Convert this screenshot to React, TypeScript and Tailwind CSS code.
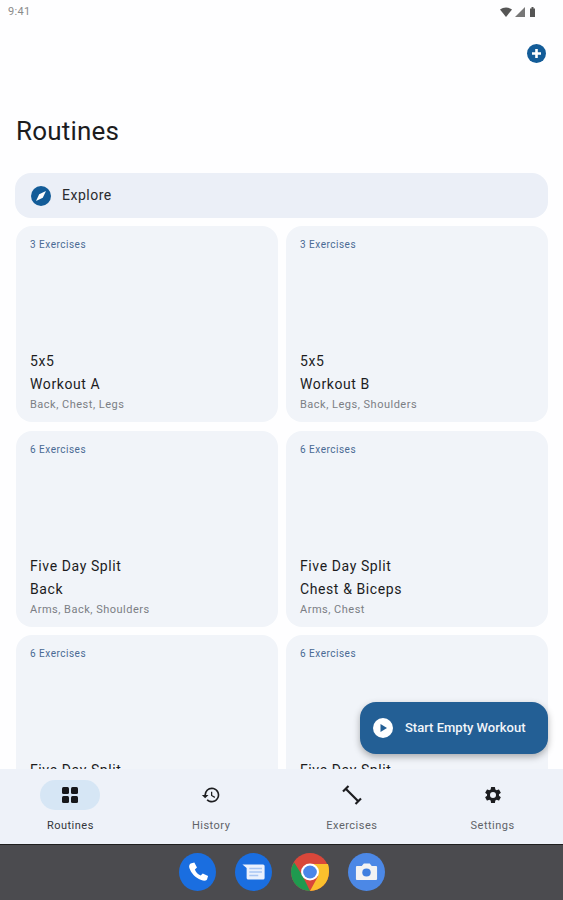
const routines = [
  { count: "3 Exercises", group: "5x5", name: "Workout A", muscles: "Back, Chest, Legs" },
  { count: "3 Exercises", group: "5x5", name: "Workout B", muscles: "Back, Legs, Shoulders" },
  { count: "6 Exercises", group: "Five Day Split", name: "Back", muscles: "Arms, Back, Shoulders" },
  { count: "6 Exercises", group: "Five Day Split", name: "Chest & Biceps", muscles: "Arms, Chest" },
  { count: "6 Exercises", group: "Five Day Split", name: "Legs", muscles: "Legs, Shoulders" },
  { count: "6 Exercises", group: "Five Day Split", name: "Shoulders", muscles: "Arms, Shoulders" },
];

function StatusBar() {
  return (
    <div className="flex h-6 items-center justify-between pl-2 pr-[23px] text-[11px] tracking-[0.3px] text-[#8a8a8a]">
      <span>9:41</span>
      <svg width="40" height="12" viewBox="0 0 40 12" fill="#555">
        <path d="M0 3.5C3.5 .8 8.5 .8 12 3.5L6 11Z" />
        <path d="M25 1V11H15Z" fill="#777" />
        <path d="M30 2.5H31.5V1H33.5V2.5H35V11H30Z" />
      </svg>
    </div>
  );
}

function RoutineCard({ count, group, name, muscles }: (typeof routines)[number]) {
  return (
    <div className="flex h-[196px] flex-col rounded-2xl bg-[#f1f4f9] pl-[14px] pt-[12px]">
      <div className="text-[10px] leading-[13px] tracking-[0.5px] text-[#4a6a94]">{count}</div>
      <div className="mt-auto pb-[10px]">
        <div className="text-[14px] leading-[23px] tracking-[0.6px] text-[#1c1c1e]">{group}</div>
        <div className="text-[14px] leading-[23px] tracking-[0.6px] text-[#1c1c1e]">{name}</div>
        <div className="mt-px text-[11px] leading-[15px] tracking-[0.5px] text-[#7b7e84]">{muscles}</div>
      </div>
    </div>
  );
}

function NavItem({ label, active, children }: { label: string; active?: boolean; children: React.ReactNode }) {
  return (
    <div className="flex flex-1 flex-col items-center">
      <div className={`flex h-[30px] w-[60px] items-center justify-center rounded-full ${active ? "bg-[#d6e6f5]" : ""}`}>
        {children}
      </div>
      <div className={`mt-[9px] text-[11px] leading-[14px] tracking-[0.5px] ${active ? "text-[#33363a]" : "text-[#606368]"}`}>
        {label}
      </div>
    </div>
  );
}

export default function App() {
  return (
    <div className="relative flex h-[900px] w-[563px] flex-col overflow-hidden bg-[#fefeff] font-['Roboto',sans-serif]">
      <StatusBar />
      <div className="flex justify-end pr-[17px] pt-[20px]">
        <svg width="19" height="19" viewBox="0 0 19 19">
          <circle cx="9.5" cy="9.5" r="9.5" fill="#135c98" />
          <path d="M9.5 5V14M5 9.5H14" stroke="#fff" strokeWidth="2.6" />
        </svg>
      </div>
      <h1 className="mt-[52px] pl-4 text-[26px] leading-[32px] tracking-[0.2px] text-[#1c1c1e]">Routines</h1>
      <main className="mt-[26px] min-h-0 flex-1 overflow-hidden px-[15px]">
        <div className="flex h-[45px] items-center gap-[11px] rounded-2xl bg-[#ebeff7] pl-[16px]">
          <svg width="20" height="20" viewBox="0 0 20 20">
            <circle cx="10" cy="10" r="10" fill="#135c98" />
            <path d="M15 5L11.8 11.8L5 15L8.2 8.2Z" fill="#fff" />
          </svg>
          <span className="text-[14px] tracking-[0.5px] text-[#2a2b2e]">Explore</span>
        </div>
        <div className="mt-[8px] grid grid-cols-2 gap-x-[8px] gap-y-[8.5px] pl-px">
          {routines.map((routine) => (
            <RoutineCard key={routine.name} {...routine} />
          ))}
        </div>
      </main>
      <div className="absolute left-[360px] top-[702px] flex h-[52px] w-[188px] items-center gap-[12px] rounded-2xl bg-[#235f95] pl-[13px] shadow-[0_3px_7px_rgba(0,0,0,0.3)]">
        <svg width="20" height="20" viewBox="0 0 20 20">
          <circle cx="10" cy="10" r="10" fill="#fff" />
          <path d="M7.5 6L14 10L7.5 14Z" fill="#235f95" />
        </svg>
        <span className="text-[13px] font-medium text-[#f1f5fa]">Start Empty Workout</span>
      </div>
      <nav className="flex h-[75px] bg-[#eef2f9] pt-[11px]">
        <NavItem label="Routines" active>
          <svg width="18" height="18" viewBox="0 0 18 18" fill="#15171a">
            <rect x="1" y="1" width="7" height="7" rx="1.5" />
            <rect x="10" y="1" width="7" height="7" rx="1.5" />
            <rect x="1" y="10" width="7" height="7" rx="1.5" />
            <rect x="10" y="10" width="7" height="7" rx="1.5" />
          </svg>
        </NavItem>
        <NavItem label="History">
          <svg width="20" height="20" viewBox="0 0 24 24" fill="#1c1d20">
            <path d="M13 3a9 9 0 0 0-9 9H1l3.9 3.9.1.1L9 12H6a7 7 0 1 1 2.05 4.95L6.63 18.37A9 9 0 1 0 13 3zm-1 5v5l4.25 2.52.77-1.28-3.52-2.09V8z" />
          </svg>
        </NavItem>
        <NavItem label="Exercises">
          <svg width="20" height="20" viewBox="0 0 20 20" fill="none" stroke="#1c1d20" strokeWidth="2.2">
            <path d="M4 4L16 16" />
            <path d="M1 6.5L6.5 1" />
            <path d="M13.5 19L19 13.5" />
          </svg>
        </NavItem>
        <NavItem label="Settings">
          <svg width="20" height="20" viewBox="0 0 24 24" fill="#1c1d20">
            <path d="M19.14 12.94c.04-.3.06-.61.06-.94s-.02-.64-.07-.94l2.03-1.58a.49.49 0 0 0 .12-.61l-1.92-3.32a.49.49 0 0 0-.59-.22l-2.39.96a7 7 0 0 0-1.62-.94l-.36-2.54a.48.48 0 0 0-.48-.41h-3.84a.48.48 0 0 0-.47.41l-.36 2.54a7.2 7.2 0 0 0-1.62.94l-2.39-.96a.48.48 0 0 0-.59.22L2.74 8.87a.48.48 0 0 0 .12.61l2.03 1.58c-.05.3-.09.63-.09.94s.02.64.07.94l-2.03 1.58a.49.49 0 0 0-.12.61l1.92 3.32c.12.22.37.29.59.22l2.39-.96c.5.38 1.03.7 1.62.94l.36 2.54c.05.24.24.41.48.41h3.84c.24 0 .44-.17.47-.41l.36-2.54a7 7 0 0 0 1.62-.94l2.39.96c.22.08.47 0 .59-.22l1.92-3.32a.48.48 0 0 0-.12-.61zM12 15.6a3.6 3.6 0 1 1 0-7.2 3.6 3.6 0 0 1 0 7.2z" />
          </svg>
        </NavItem>
      </nav>
      <div className="flex h-[56px] items-center justify-center gap-[19px] border-t border-[#1f1f1f] bg-[#4b4b4f] pb-[1px]">
        <svg width="37" height="38" viewBox="0 0 35 38" preserveAspectRatio="none">
          <ellipse cx="17.5" cy="19" rx="17.5" ry="19" fill="#1a6ee0" />
          <path d="M11 10.5L14.5 9.5L17 14.5L15 16.5C16 19.5 18 21.5 20.5 22.5L22.5 20.5L27.5 23L26.5 26.5C25.5 28 23.5 28 21 27C15 24.5 11.5 20 9.8 15C9.2 13 9.8 11.5 11 10.5Z" fill="#fff" />
        </svg>
        <svg width="37" height="38" viewBox="0 0 35 38" preserveAspectRatio="none">
          <ellipse cx="17.5" cy="19" rx="17.5" ry="19" fill="#1a6ee0" />
          <path d="M7 11.5H26.5A1.5 1.5 0 0 1 28 13V25A1.5 1.5 0 0 1 26.5 26.5H12.5A1.5 1.5 0 0 1 11 25V15Z" fill="#eaf1fd" />
          <path d="M13.5 15.5H25.5M13.5 19H25.5M13.5 22.5H22" stroke="#a9c6f3" strokeWidth="1.6" />
        </svg>
        <svg width="38" height="38" viewBox="0 0 36 38" preserveAspectRatio="none">
          <ellipse cx="18" cy="19" rx="18" ry="19" fill="#d9473a" />
          <path d="M3 9.5L11 23L18 38C8 38 0 29.5 0 19C0 15.5 1 12.3 3 9.5Z" fill="#1f9a4f" />
          <path d="M18 11H35C36 13.5 36 16.2 36 19C36 29.5 28 38 18 38L25.5 23.5Z" fill="#fbc02d" />
          <circle cx="18" cy="19" r="8.5" fill="#fff" />
          <circle cx="18" cy="19" r="6.5" fill="#4a86e8" />
        </svg>
        <svg width="37" height="38" viewBox="0 0 35 38" preserveAspectRatio="none">
          <ellipse cx="17.5" cy="19" rx="17.5" ry="19" fill="#4c88e6" />
          <path d="M8.5 13H13L15 10.5H20.5L22.5 13H26.5A1 1 0 0 1 27.5 14V26A1 1 0 0 1 26.5 27H8.5A1 1 0 0 1 7.5 26V14A1 1 0 0 1 8.5 13Z" fill="#f3f3f3" />
          <circle cx="17.5" cy="19.5" r="4" fill="#3f7fe0" />
        </svg>
      </div>
    </div>
  );
}
